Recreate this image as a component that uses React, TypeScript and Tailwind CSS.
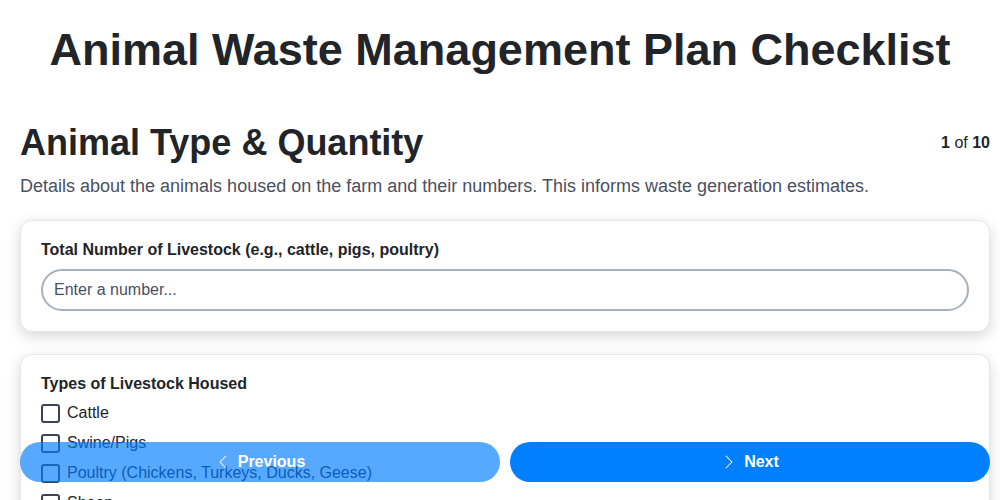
import React, { useState } from 'react';
import { BsChevronLeft, BsChevronRight } from 'react-icons/bs';

const livestockTypes = [
  'Cattle',
  'Swine/Pigs',
  'Poultry (Chickens, Turkeys, Ducks, Geese)',
  'Sheep',
  'Goats',
  'Horses',
  'Other',
];

const App = () => {
  const [total, setTotal] = useState('');
  const [checked, setChecked] = useState<string[]>([]);

  const toggle = (name: string) => {
    setChecked((prev) => (prev.includes(name) ? prev.filter((n) => n !== name) : [...prev, name]));
  };

  return (
    <div className="min-h-screen bg-white pl-5 pr-2.5 pt-[22px] pb-24 text-[#212529] font-['Liberation_Sans',Arial,sans-serif]">
      <h1 className="-ml-2.5 text-center text-[45px] leading-[56px] font-bold">
        Animal Waste Management Plan Checklist
      </h1>

      <div className="mt-[43px] flex items-center justify-between">
        <h2 className="text-[36px] leading-[44px] font-bold">Animal Type &amp; Quantity</h2>
        <div className="text-base">
          <span className="font-bold">1</span> of <span className="font-bold">10</span>
        </div>
      </div>
      <p className="mt-2 text-lg leading-[27px] text-[#4a5063]">
        Details about the animals housed on the farm and their numbers. This informs waste generation estimates.
      </p>

      <div className="mt-5 rounded-xl border border-[#e6e7ec] bg-white px-5 pt-[19px] pb-5 shadow-[0_4px_14px_rgba(0,0,0,0.16)]">
        <label htmlFor="total" className="block text-base leading-[19px] font-bold">
          Total Number of Livestock (e.g., cattle, pigs, poultry)
        </label>
        <input
          id="total"
          type="text"
          value={total}
          onChange={(e) => setTotal(e.target.value)}
          placeholder="Enter a number..."
          className="mt-2.5 h-[42px] w-full rounded-full border-2 border-[#a7b0ba] px-[11px] text-base text-[#212529] placeholder:text-[#4a5063] outline-none"
        />
      </div>

      <div className="mt-[22px] rounded-xl border border-[#e6e7ec] bg-white px-5 pt-[19px] pb-5 shadow-[0_4px_14px_rgba(0,0,0,0.16)]">
        <div className="text-base leading-[19px] font-bold">Types of Livestock Housed</div>
        <div className="mt-2.5 flex flex-col gap-2.5">
          {livestockTypes.map((name) => (
            <label key={name} className="flex h-5 items-center gap-[7px] text-base cursor-pointer">
              <input
                type="checkbox"
                checked={checked.includes(name)}
                onChange={() => toggle(name)}
                className="h-[19px] w-[19px] appearance-none rounded-[3px] border-2 border-[#3d4354] bg-white checked:bg-[#007bff] checked:border-[#007bff]"
              />
              <span>{name}</span>
            </label>
          ))}
        </div>
      </div>

      <div className="fixed bottom-[18px] left-5 right-2.5 flex gap-2.5">
        <button
          disabled
          className="flex h-10 flex-1 items-center justify-center gap-[7px] rounded-full bg-[#007bff] text-base font-bold text-white opacity-[0.66]"
        >
          <BsChevronLeft size={16} />
          Previous
        </button>
        <button className="flex h-10 flex-1 items-center justify-center gap-[7px] rounded-full bg-[#0080ff] text-base font-bold text-white">
          <BsChevronRight size={16} />
          Next
        </button>
      </div>
    </div>
  );
};

export default App;
